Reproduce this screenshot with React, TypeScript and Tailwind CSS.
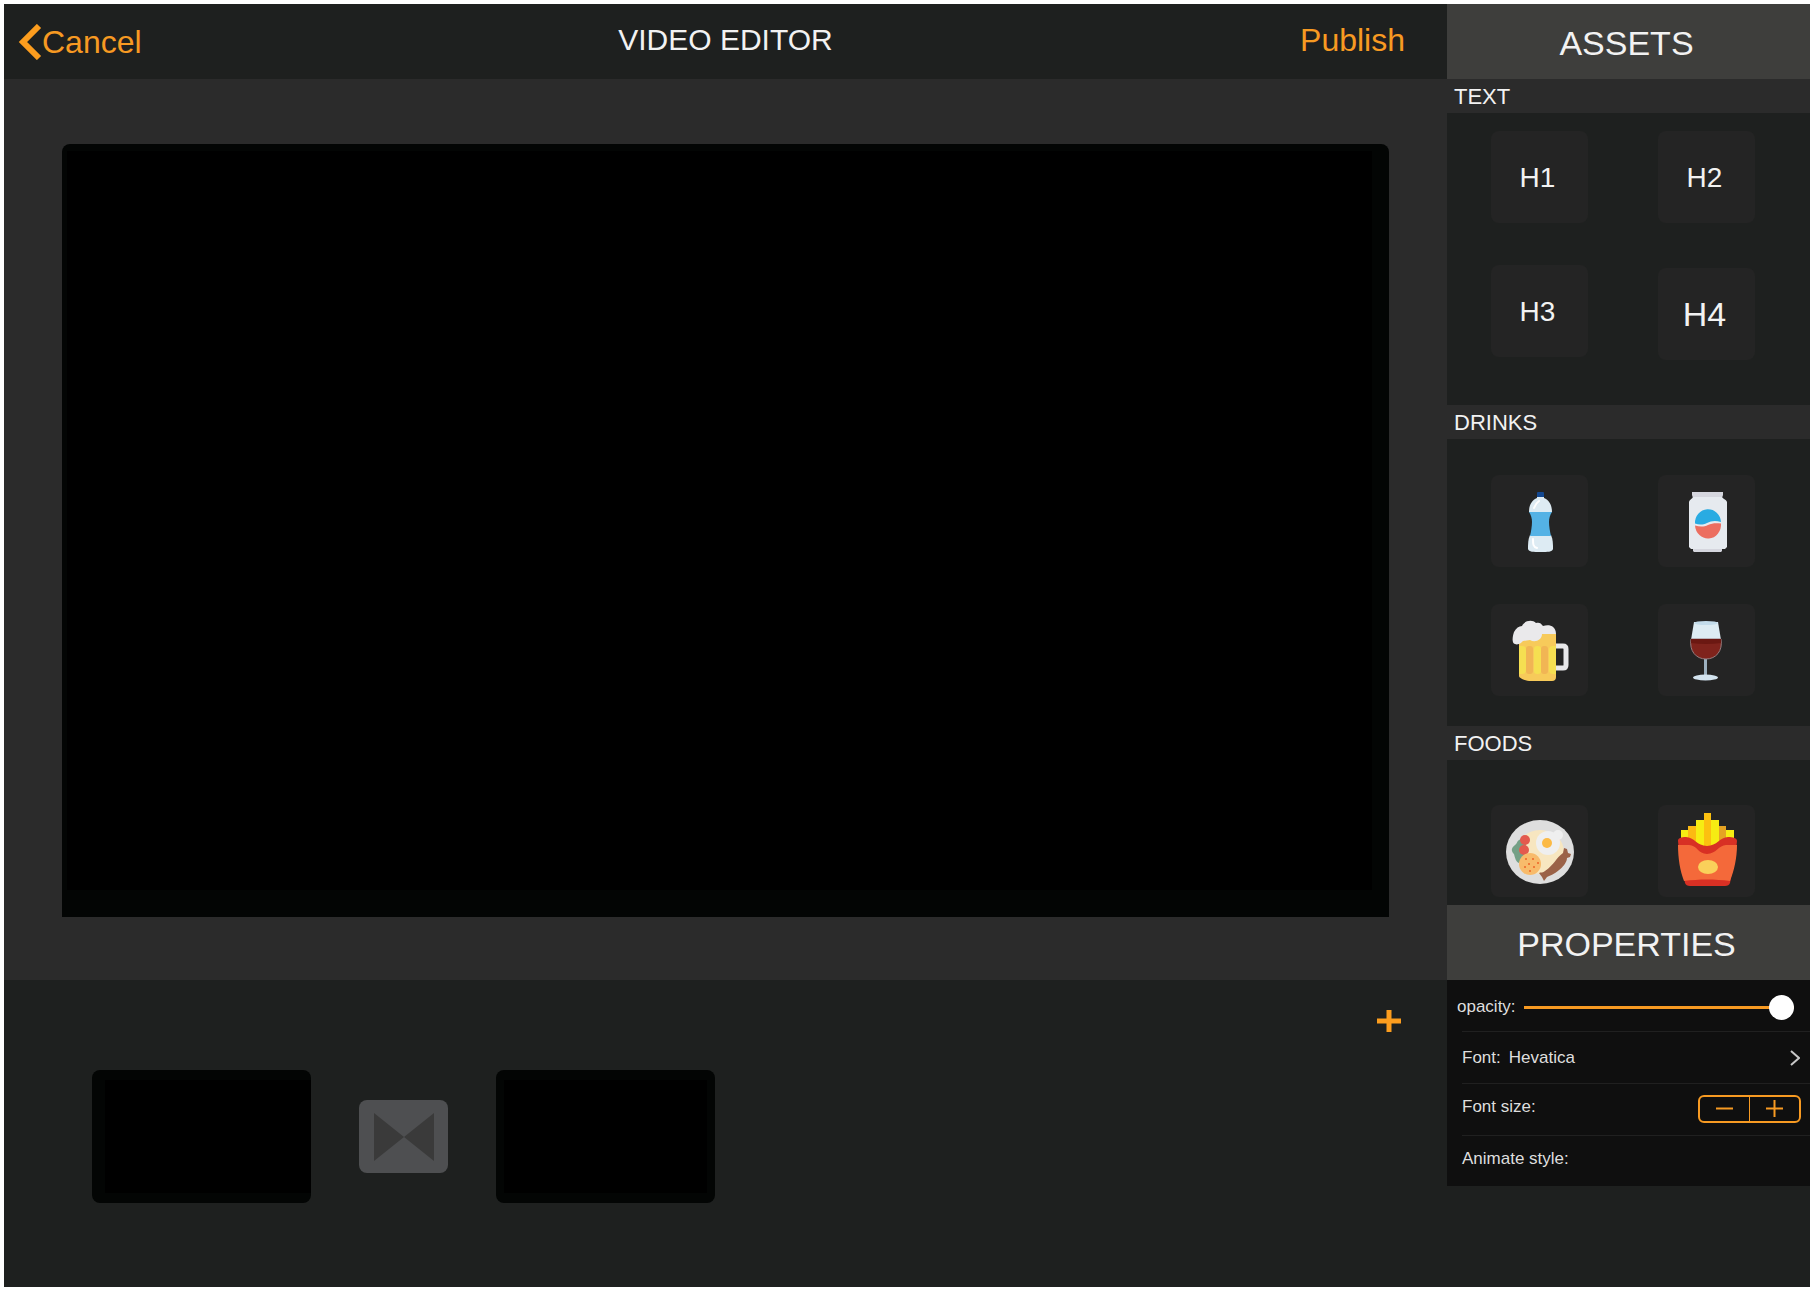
import React, { useState } from "react";

function Bottle() {
  return (
    <svg viewBox="0 0 97 92" className="h-full w-full" aria-hidden="true">
      <rect x="46" y="17" width="7" height="6" rx="1" fill="#134891" />
      <path d="M46 22h7v1c5 2 8 7 8 14H38c0-7 3-12 8-14z" fill="#ddebf3" />
      <path d="M39 60h21c2 4 2 9 2 14-1 3-5 3-12.500 3S38 77 37 74c0-5 0-10 2-14z" fill="#ddebf3" />
      <path d="M38 37h23c-2 3-3 6-3 10s1 10 2 14H39c1-4 2-10 2-14s-1-7-3-10z" fill="#54b2e5" />
      <path d="M43 33c1-3 2-5 5-7M42 64c0 5 0 8 4 9" fill="none" stroke="#fff" strokeWidth="2" strokeLinecap="round" />
    </svg>
  );
}

function Can() {
  return (
    <svg viewBox="0 0 97 92" className="h-full w-full" aria-hidden="true">
      <path d="M34 17h31v3l-1 3H35l-1-3zM35 73h29v3l-1 1H36l-1-1z" fill="#d5d6de" />
      <path d="M35 22h29c1 2 4 2 5 5v45l-2 2H33l-2-2V27c1-3 3-3 4-5z" fill="#e6eaef" />
      <path d="M37 48.500A13 13.500 0 0 1 63 47c-6-2-10-1-14 1s-8 2-12 .5z" fill="#29abe2" />
      <path d="M37 50.500c5 1.500 9 1.500 13-.5s8-2 13-1.500a13 14 0 0 1-26 2z" fill="#ec6e60" />
    </svg>
  );
}

function Beer() {
  return (
    <svg viewBox="0 0 97 92" className="h-full w-full" aria-hidden="true">
      <path d="M63 42h9q3 0 3 3v16q0 3-3 3h-9" fill="none" stroke="#e8e8ea" strokeWidth="5" />
      <path d="M28 30h37v43q0 4-4 4H40c-6 0-12-3-12-5z" fill="#f7ca5a" />
      <path d="M28 42h3q4 0 4 4v20q0 4-4 4h-3z" fill="#f5df51" />
      <rect x="35" y="42" width="7" height="28" rx="3" fill="#f1b554" />
      <rect x="43" y="42" width="7" height="28" rx="3" fill="#f5df51" />
      <rect x="50" y="42" width="7" height="28" rx="3" fill="#f1b554" />
      <path d="M65 42h-3q-4 0-4 4v20q0 4 4 4h3z" fill="#f5df51" />
      <path d="M24 40c-4-1-2-9-1-12 2-4 5-6 8-6 2-5 10-7 14-3 3-1 5 0 7 3 5-2 13-1 13 8H51c0 6-7 9-12 6-4 1-7 0-9 3-2 1-4 2-6 1z" fill="#eae9eb" />
    </svg>
  );
}

function Wine() {
  return (
    <svg viewBox="0 0 97 92" className="h-full w-full" aria-hidden="true">
      <rect x="46" y="54" width="3" height="19" fill="#9cb0bf" />
      <ellipse cx="47.500" cy="73.500" rx="12.500" ry="3" fill="#d3e3ef" />
      <path d="M36 18l-3 18h30l-3-18z" fill="#ddecf3" />
      <ellipse cx="48" cy="19" rx="12" ry="2" fill="#c3dceb" />
      <path d="M33 35h30c2 12-5 20-15 20S31 47 33 35z" fill="#7f231c" stroke="#957d80" strokeWidth="1" />
      <path d="M33 35h30v4q-15 2-30 0z" fill="#6b1812" />
    </svg>
  );
}

function Breakfast() {
  return (
    <svg viewBox="0 0 97 92" className="h-full w-full" aria-hidden="true">
      <ellipse cx="49" cy="47" rx="34" ry="32" fill="#dedede" />
      <ellipse cx="49" cy="47" rx="24" ry="22" fill="#f7e6c0" />
      <path d="M30 34c-5 2-3 4-6 6-4 3-4 6-1 9 1 4 2 8 5 9l6-9 1-11z" fill="#74a086" />
      <circle cx="34" cy="35" r="5" fill="#e35a4e" />
      <circle cx="33" cy="45" r="5" fill="#e35a4e" />
      <circle cx="39" cy="59" r="11" fill="#f8bb6b" />
      <path d="M34 54h2M41 54h2M46 58h2M37 59h2M33 62h2M42 62h2M38 66h2" stroke="#f07a38" strokeWidth="2" />
      <circle cx="57" cy="38" r="12" fill="#efefef" />
      <circle cx="67" cy="30" r="5" fill="#efefef" />
      <circle cx="56" cy="38" r="5" fill="#fcba45" />
      <path d="M73 43l3 1 1 4 3 1-1 3-3 1c0 7-11 16-20 19l-3 4-2-4-3-4c2-1 4 0 6-2 9-6 11-13 18-18z" fill="#9b6248" />
    </svg>
  );
}

function Fries() {
  return (
    <svg viewBox="0 0 97 92" className="h-full w-full" aria-hidden="true">
      <rect x="23" y="25" width="53" height="12" fill="#f6ec13" />
      <rect x="30" y="21" width="8" height="20" fill="#fcb913" />
      <rect x="60" y="21" width="8" height="20" fill="#e5a323" />
      <rect x="38" y="15" width="23" height="28" fill="#f6ec13" />
      <rect x="46" y="8" width="7" height="36" fill="#fcc010" />
      <path d="M20 36c0-3 3-4 8-4 8 0 11 9 21 9s13-9 21-9c5 0 9 1 9 4l-1 10-6 32q-1 3-5 3H32q-4 0-5-3l-6-32z" fill="#d83024" />
      <path d="M20 40h11c8 0 9 9 18 9s12-9 19-9h11c0 13-3 26-7 36-15-2-31-2-46 0-4-10-6-23-6-36z" fill="#f4693a" />
      <ellipse cx="50" cy="62" rx="10" ry="7" fill="#fad05a" />
    </svg>
  );
}

function Tile({ label, children, className = "" }: { label: string; children: React.ReactNode; className?: string }) {
  return (
    <button type="button" aria-label={label} className={"flex h-[92px] w-[97px] items-center justify-center rounded-lg bg-[#242424] " + className}>
      {children}
    </button>
  );
}

function Section({ title, className, children }: { title: string; className: string; children: React.ReactNode }) {
  return (
    <section>
      <h3 className="flex h-[34px] items-center bg-[#2b2b2b] px-[7px] pt-0.5 text-[22px] leading-8">{title}</h3>
      <div className={"grid grid-cols-[97px_97px] content-start items-start justify-between pr-[55px] pl-11 " + className}>{children}</div>
    </section>
  );
}

export default function App() {
  const [opacity, setOpacity] = useState(100);
  return (
    <div className="min-h-screen bg-white pt-1 pr-[3px] pb-[5px] pl-1 font-['Liberation_Sans',Arial,sans-serif] text-[#f2f2f2]">
      <div className="flex min-h-[1283px] bg-[#1e201f]">
        <main className="flex min-w-0 flex-1 flex-col">
          <header className="grid h-[75px] grid-cols-3 items-center px-3.5 pb-[3px]">
            <button type="button" className="flex items-center justify-self-start pt-1 text-[32px] leading-9 text-[#f79a22]">
              <svg viewBox="0 0 24 36" className="h-9 w-6" aria-hidden="true">
                <path d="M21 2L5 18L21 34" fill="none" stroke="#fc9d1e" strokeWidth="6" />
              </svg>
              Cancel
            </button>
            <h1 className="justify-self-center text-[30px] leading-9">VIDEO EDITOR</h1>
            <button type="button" className="mr-7 justify-self-end text-[32px] leading-9 text-[#f79a22]">Publish</button>
          </header>
          <div className="flex h-[901px] bg-[#2b2b2b] px-[58px] pt-[65px] pb-[63px]">
            <div className="flex flex-1 rounded-t-lg bg-[#030504] pt-[7px] pr-[17px] pb-[27px] pl-[5px]">
              <div className="flex-1 bg-black" />
            </div>
          </div>
          <div className="flex flex-1 flex-col">
            <button type="button" aria-label="Add clip" className="mt-[29px] mr-[46px] self-end">
              <svg viewBox="0 0 24 24" className="h-6 w-6" aria-hidden="true">
                <path d="M12 1v22M0 12h24" stroke="#fc9d1e" strokeWidth="5" />
              </svg>
            </button>
            <div className="mt-[37px] flex items-center pl-[88px]">
              <div className="flex h-[133px] w-[219px] rounded-lg bg-[#030504] py-2.5 pl-[13px]">
                <div className="flex-1 bg-black" />
              </div>
              <button type="button" aria-label="Transition" className="mx-12 flex h-[73px] w-[89px] items-center justify-center rounded-lg bg-[#4e4f51]">
                <svg viewBox="0 0 60 48" className="h-12 w-[60px]" aria-hidden="true">
                  <path d="M0 0L30 24L0 48zM60 0L30 24L60 48z" fill="#3a3a3a" />
                </svg>
              </button>
              <div className="flex h-[133px] w-[219px] rounded-lg bg-[#030504] px-2 py-2.5">
                <div className="flex-1 bg-black" />
              </div>
            </div>
          </div>
        </main>
        <aside className="w-[363px] shrink-0">
          <h2 className="flex h-[75px] items-center justify-center bg-[#3e3e3c] pt-0.5 pr-1 text-[34px] leading-10">ASSETS</h2>
          <Section title="TEXT" className="h-[292px] gap-y-[42px] pt-[18px] text-[28px]">
            <Tile label="H1" className="pt-0.5 pr-1">H1</Tile>
            <Tile label="H2" className="pt-0.5 pr-1">H2</Tile>
            <Tile label="H3" className="pt-0.5 pr-1">H3</Tile>
            <Tile label="H4" className="mt-[3px] pr-1 text-[34px]">H4</Tile>
          </Section>
          <Section title="DRINKS" className="h-[287px] gap-y-[37px] pt-9">
            <Tile label="Water"><Bottle /></Tile>
            <Tile label="Soda"><Can /></Tile>
            <Tile label="Beer"><Beer /></Tile>
            <Tile label="Wine"><Wine /></Tile>
          </Section>
          <Section title="FOODS" className="h-[145px] pt-[45px]">
            <Tile label="Breakfast"><Breakfast /></Tile>
            <Tile label="Fries"><Fries /></Tile>
          </Section>
          <h2 className="flex h-[75px] items-center justify-center bg-[#3e3e3c] pt-0.5 pr-1 text-[34px] leading-10">PROPERTIES</h2>
          <div className="bg-[#0f0f0f] text-[17px] leading-5 text-[#dedede]">
            <div className="flex h-[51px] items-center pt-0.5 pr-4 pl-2.5">
              <label htmlFor="opacity" className="pr-2">opacity:</label>
              <input
                id="opacity"
                type="range"
                value={opacity}
                onChange={(e) => setOpacity(Number(e.target.value))}
                className="mt-0.5 h-6 min-w-0 flex-1 appearance-none bg-transparent [&::-webkit-slider-runnable-track]:h-[3px] [&::-webkit-slider-runnable-track]:bg-[#f79a22] [&::-webkit-slider-thumb]:mt-[-11px] [&::-webkit-slider-thumb]:size-[25px] [&::-webkit-slider-thumb]:appearance-none [&::-webkit-slider-thumb]:rounded-full [&::-webkit-slider-thumb]:bg-white"
              />
            </div>
            <button type="button" className="ml-[15px] flex h-[52px] w-[348px] items-center border-t border-[#202020] pr-2.5 text-left">
              <span className="flex-1">Font:<span className="pl-2">Hevatica</span></span>
              <svg viewBox="0 0 10 16" className="h-4 w-2.5" aria-hidden="true">
                <path d="M1 1L9 8L1 15" fill="none" stroke="#c8c8c8" strokeWidth="2" />
              </svg>
            </button>
            <div className="ml-[15px] flex h-[52px] items-center justify-between border-t border-[#202020] pr-[9px] pb-0.5">
              <span className="pb-1">Font size:</span>
              <div className="flex h-7 w-[103px] divide-x divide-[#f79a22] rounded-md border-2 border-[#f79a22]">
                <button type="button" aria-label="Decrease font size" className="flex flex-1 items-center justify-center">
                  <svg viewBox="0 0 17 17" className="size-[17px]" aria-hidden="true"><path d="M0 8.500h17" stroke="#f79a22" strokeWidth="2" /></svg>
                </button>
                <button type="button" aria-label="Increase font size" className="flex flex-1 items-center justify-center">
                  <svg viewBox="0 0 17 17" className="size-[17px]" aria-hidden="true"><path d="M0 8.500h17M8.500 0v17" stroke="#f79a22" strokeWidth="2" /></svg>
                </button>
              </div>
            </div>
            <div className="ml-[15px] flex h-[51px] items-center border-t border-[#202020] pb-1">Animate style:</div>
          </div>
        </aside>
      </div>
    </div>
  );
}
